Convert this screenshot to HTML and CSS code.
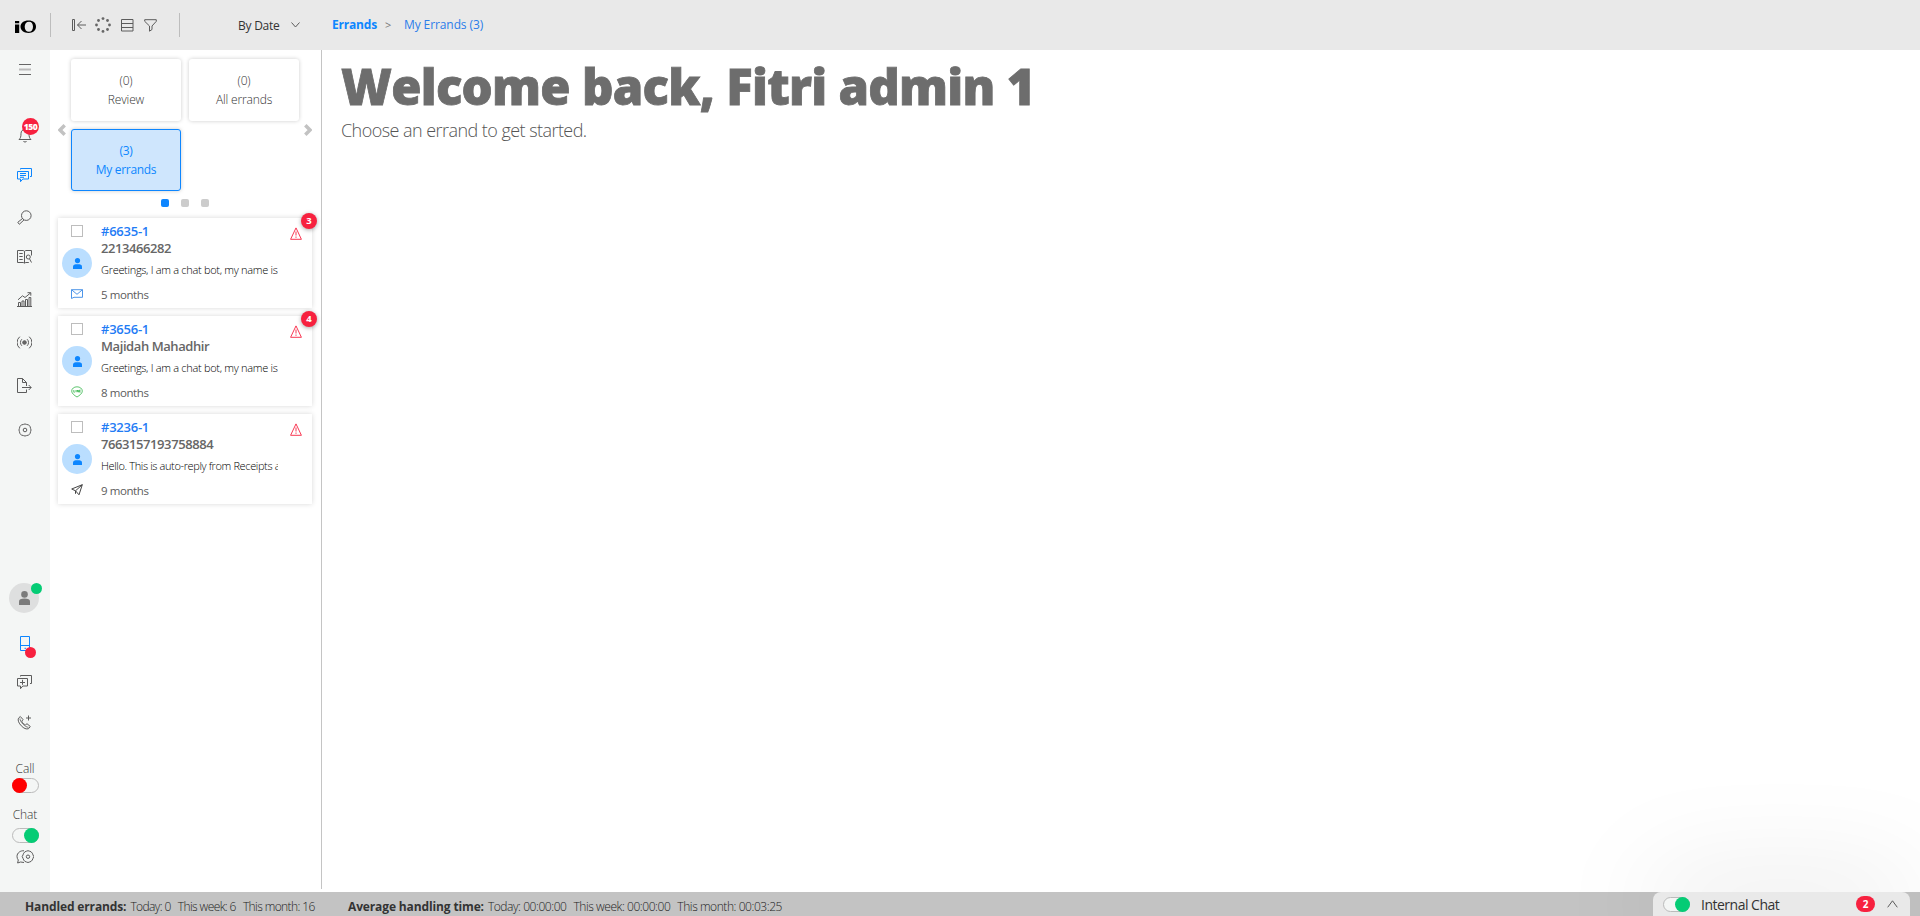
FILE: index.html
```html
<!DOCTYPE html>
<html lang="en">
<head>
<meta charset="utf-8">
<title>Errands</title>
<link rel="stylesheet" href="styles.css">
</head>
<body>
<div class="app">
  <header class="topbar">
    <svg class="logo" width="22" height="14" viewBox="0 0 22 14"><path d="M0 1h4.200v2.200H0zM0 4.600h4.200V13H0z"/><path fill-rule="evenodd" d="M13.500.5c5 0 7.500 2.500 7.500 6.100 0 3.900-3 6.400-7.500 6.400S5.500 10.500 5.500 6.800 8.500.5 13.500.5zm.6 1.300c-2.600 0-4.400 2-4.400 4.900 0 3 1.700 5 4.300 5 2.400 0 4-2 4-5 0-2.900-1.600-4.900-3.900-4.900z"/></svg>
    <span class="divider"></span>
    <div class="tools">
      <svg class="icon" width="15" height="14" viewBox="0 0 15 14"><path d="M.5 1.500h2v11h-2zM14 7H5.500M9.500 3L5.500 7l4 4"/></svg>
      <svg class="dots" width="16" height="16" viewBox="0 0 16 16"><circle cx="8" cy="1.600" r="1.400"/><circle cx="12.500" cy="3.500" r="1.400"/><circle cx="14.500" cy="8" r="1.400"/><circle cx="12.500" cy="12.500" r="1.400"/><circle cx="8" cy="14.400" r="1.400"/><circle cx="3.500" cy="12.500" r="1.400"/><circle cx="1.500" cy="8" r="1.400"/><circle cx="3.500" cy="3.500" r="1.400"/></svg>
      <svg class="icon" width="13" height="13" viewBox="0 0 13 13"><path d="M.5.5h11.500v11.500H.5zM.5 4.500H12M.5 8.500H12"/></svg>
      <svg class="icon" width="13" height="13" viewBox="0 0 13 13"><path d="M.7.700h11.600v1.600L8 7v3.500l-2.500 1.700V7L.7 2.300z"/></svg>
    </div>
    <span class="divider divider-end"></span>
    <span class="sort">By Date</span>
    <svg class="icon sort-arrow" width="9" height="6" viewBox="0 0 9 6"><path d="M.5.500l4 4.500 4-4.500"/></svg>
    <nav class="crumbs"><b>Errands</b><i>&gt;</i><span>My Errands (3)</span></nav>
  </header>

  <div class="body">
    <aside class="rail">
      <div class="slot"><svg width="12" height="12" viewBox="0 0 12 12"><path d="M0 .5h12M0 10.500h12" stroke="#666"/><path d="M0 5.500h12" stroke="#bbb" stroke-width="2"/></svg></div>
      <div class="slot"><svg class="icon" width="14" height="16" viewBox="0 0 14 16"><path d="M1 12.500c1.500-1.500 2-2.500 2-6C3 4 4.500 2.500 7 2.500s4 1.500 4 4c0 3.500.5 4.500 2 6zM5.300 14c.9 1.400 2.500 1.400 3.400 0"/></svg><span class="count">150</span></div>
      <div class="slot odd"><svg class="icon blue" width="15" height="15" viewBox="0 0 15 15"><path d="M.5 3.500h11v7.500H5.800L3.500 13.700V11H.5zM3.500 1.500V.5h11v8h-1.500M3 5.500h6M3 7.500h6M3 9.300h4"/></svg></div>
      <div class="slot odd"><svg class="icon" width="15" height="15" viewBox="0 0 15 15"><circle cx="9.300" cy="5.600" r="4.800"/><path d="M5.500 8.500L.8 12.300l1.500 2L7 9.900"/></svg></div>
      <div class="slot odd"><svg class="icon" width="15" height="15" viewBox="0 0 15 15"><path d="M.5 1.500h5.700L7.500 2.300l1.300-.8h5.700v5M.5 1.500v12h5.700l1.300.6 1.300-.6h3M7.500 2.300v11.800M2.300 4.500h3.400M2.300 7.500h3.400M2.300 10.500h3.400M12.500 9.800l2 3.700"/><circle cx="11.300" cy="8" r="2"/></svg></div>
      <div class="slot odd"><svg class="icon" width="15" height="15" viewBox="0 0 15 15"><path d="M0 14.500h15M1.500 14v-3.500h2V14M5 14V9h2v5M8.500 14V7.500h2V14M12 14V5.500h1.800V14M1 7.800l4.500-4 2.500 1.700 5.500-4.500M10.500.700h3.300v3"/></svg></div>
      <div class="slot odd"><svg class="icon" width="15" height="13" viewBox="0 0 15 13"><circle cx="7.500" cy="6.500" r="1.800" fill="#666"/><path d="M4.900 3.200a4.500 4.500 0 0 0 0 6.600M10.100 3.200a4.500 4.500 0 0 1 0 6.600M2.800.700a7.500 7.500 0 0 0 0 11.600M12.200.700a7.500 7.500 0 0 1 0 11.600"/></svg></div>
      <div class="slot odd"><svg class="icon" width="15" height="15" viewBox="0 0 15 15"><path d="M9.500 8V4.500L5.500.5h-5v14h9V11.500M5.500.5v4h4M5 9.500h9M11.700 7l2.500 2.500-2.500 2.500"/></svg></div>
      <div class="slot"><svg class="icon" width="14" height="14" viewBox="0 0 14 14"><path d="M5.500 1.400a3 3 0 0 1 3 0l1.900.5a3 3 0 0 1 1.700 1.700l.5 1.900a3 3 0 0 1 0 3l-.5 1.900a3 3 0 0 1-1.700 1.700l-1.900.5a3 3 0 0 1-3 0l-1.900-.5a3 3 0 0 1-1.700-1.700l-.5-1.900a3 3 0 0 1 0-3l.5-1.900a3 3 0 0 1 1.700-1.700z"/><circle cx="7" cy="7" r="1.800"/></svg></div>
      <div class="slot shift"><span class="avatar gray"><svg width="11" height="14" viewBox="0 0 11 14"><circle cx="5.500" cy="3.400" r="3.300"/><path d="M0 14v-3.500C0 8.500 2 7.600 5.500 7.600S11 8.500 11 10.500V14z"/></svg></span><span class="dot green"></span></div>
      <div class="slot"><svg class="icon blue" width="10" height="15" viewBox="0 0 10 15"><path d="M.5.500h9v14h-9zM.5 9.500h9M4.500 12.300h1.500"/></svg><span class="dot red"></span></div>
      <div class="slot odd"><svg class="icon" width="15" height="15" viewBox="0 0 15 15"><path d="M.5 3.500h10v7.500H5.800L3.500 13.700V11H.5zM3.500 1.500V.5h11v8h-1.500M5.500 4.800v5M3 7.500h5"/></svg></div>
      <div class="slot odd"><svg class="icon" width="15" height="15" viewBox="0 0 15 15"><path d="M1.500 3.200L3.300 1.500l2.700 3-1.200 1.700c.8 1.900 2 3 3.700 3.700L10 8.700l3.300 2.800-1.800 2.200c-2.200.8-4.700-.3-7.200-2.900S.5 5.200 1.500 3.200zM11.500.5v5M9 3h5"/><path d="M3 3.500c-.2 3 5 8.800 8.500 8.800" stroke-width=".8"/></svg></div>
      <div class="slot label">Call</div>
      <div class="slot"><span class="toggle off"></span></div>
      <div class="slot label">Chat</div>
      <div class="slot"><span class="toggle on"></span></div>
      <div class="slot"><svg class="icon" width="18" height="14" viewBox="0 0 18 14"><path d="M8 .8C4.500.3 1 3 1 6.300c0 1.500.4 2.700 1.300 3.700L1.600 13l3-1 3.400.5"/><path d="M10.700 1.100a2.500 2.500 0 0 1 2.600 0l1.800.7 1.200 1.400.7 1.700a2.500 2.500 0 0 1 0 3.400l-.7 1.700-1.200 1.400-1.800.7a2.500 2.500 0 0 1-2.600 0l-1.800-.7-1.200-1.400-.7-1.700a2.500 2.500 0 0 1 0-3.400l.7-1.700 1.200-1.400z"/><circle cx="12" cy="6.700" r="1.700"/></svg></div>
    </aside>

    <section class="list">
      <div class="carousel">
        <svg class="arrow" width="8" height="12" viewBox="0 0 8 12"><path d="M6.700 1.200L2 6l4.700 4.800"/></svg>
        <div class="tiles">
          <div class="tile"><span>(0)</span><span>Review</span></div>
          <div class="tile"><span>(0)</span><span>All errands</span></div>
          <div class="tile active"><span>(3)</span><span>My errands</span></div>
        </div>
        <svg class="arrow" width="8" height="12" viewBox="0 0 8 12"><path d="M1.300 1.200L6 6l-4.700 4.800"/></svg>
      </div>
      <div class="pager"><span class="current"></span><span></span><span></span></div>

      <div class="cards">
        <article class="card">
          <div class="marks"><span class="check"></span><span class="avatar sky"><svg width="9" height="11" viewBox="0 0 9 11"><circle cx="4.500" cy="2.600" r="2.600"/><path d="M0 11V8.500C0 6.800 1.500 6.200 4.500 6.200S9 6.800 9 8.500V11z"/></svg></span>
            <svg class="channel mail" width="12" height="10" viewBox="0 0 12 10"><path d="M.5.700h11v7.600H3L.5 9.500zM.5.700L6 5.300 11.500.700"/></svg></div>
          <div class="info"><span class="number">#6635-1</span><span class="name">2213466282</span><span class="preview">Greetings, I am a chat bot, my name is</span><span class="age">5 months</span></div>
          <svg class="alert" width="12" height="13" viewBox="0 0 12 13"><path d="M6 .9l5.400 11.400H.6zM6 4.500v4M6 9.500v1.300"/></svg>
          <span class="badge">3</span>
        </article>
        <article class="card">
          <div class="marks"><span class="check"></span><span class="avatar sky"><svg width="9" height="11" viewBox="0 0 9 11"><circle cx="4.500" cy="2.600" r="2.600"/><path d="M0 11V8.500C0 6.800 1.500 6.200 4.500 6.200S9 6.800 9 8.500V11z"/></svg></span>
            <svg class="channel line" width="12" height="12" viewBox="0 0 12 12"><path d="M6 .8c3 0 5.300 1.800 5.300 4.300C11.300 7.500 8.500 9.500 6 11 3.500 9.500.7 7.500.7 5.100.7 2.600 3 .8 6 .8zM2.800 4v2.200h1M5 4v2.200M6.200 6.200V4l1.200 2.200V4M9.500 4h-.9v2.200h.9M8.600 5.100h.8"/></svg></div>
          <div class="info"><span class="number">#3656-1</span><span class="name">Majidah Mahadhir</span><span class="preview">Greetings, I am a chat bot, my name is</span><span class="age">8 months</span></div>
          <svg class="alert" width="12" height="13" viewBox="0 0 12 13"><path d="M6 .9l5.400 11.400H.6zM6 4.500v4M6 9.500v1.300"/></svg>
          <span class="badge">4</span>
        </article>
        <article class="card">
          <div class="marks"><span class="check"></span><span class="avatar sky"><svg width="9" height="11" viewBox="0 0 9 11"><circle cx="4.500" cy="2.600" r="2.600"/><path d="M0 11V8.500C0 6.800 1.500 6.200 4.500 6.200S9 6.800 9 8.500V11z"/></svg></span>
            <svg class="channel" width="12" height="12" viewBox="0 0 12 12"><path d="M11.300.7L.7 5l3.800 1.800L8 10.800zM11.300.7L4.500 6.800v3"/></svg></div>
          <div class="info"><span class="number">#3236-1</span><span class="name">7663157193758884</span><span class="preview tight">Hello. This is auto-reply from Receipts a</span><span class="age">9 months</span></div>
          <svg class="alert" width="12" height="13" viewBox="0 0 12 13"><path d="M6 .9l5.400 11.400H.6zM6 4.500v4M6 9.500v1.300"/></svg>
        </article>
      </div>
    </section>

    <main class="main">
      <h1>Welcome back, Fitri admin 1</h1>
      <p>Choose an errand to get started.</p>
    </main>
  </div>

  <footer class="footer">
    <div class="stat handled"><b>Handled errands:</b><span>Today: 0</span><span>This week: 6</span><span>This month: 16</span></div>
    <div class="stat average"><b>Average handling time:</b><span>Today: 00:00:00</span><span>This week: 00:00:00</span><span>This month: 00:03:25</span></div>
    <div class="chat"><span class="toggle on"></span><span class="chat-title">Internal Chat</span><span class="chat-count">2</span><svg class="icon" width="11" height="8" viewBox="0 0 11 8"><path d="M.7 7.300l4.800-6.500 4.800 6.500"/></svg></div>
  </footer>
</div>
</body>
</html>
```
FILE: styles.css
```css
* { box-sizing: border-box; }
body { margin: 0; font-family: "Open Sans", "Noto Sans", sans-serif; font-size: 12px; color: #5c5c5c; }
svg { display: block; flex: none; }
.app { height: 916px; display: flex; flex-direction: column; overflow: hidden; background: #fff; }
.icon { fill: none; stroke: #5c5c5c; stroke-width: 1; }
.icon.blue { stroke: #0d86ff; }

.topbar { height: 50px; flex: none; background: #e9e9e9; display: flex; align-items: center; padding-left: 15px; }
.logo { margin-top: 4px; }
.divider { width: 1px; height: 24px; margin-left: 13px; background: #bdbdbd; }
.tools { display: flex; align-items: center; gap: 10px; margin-left: 21px; }
.tools .dots { margin: 0 -1px 0 -2px; fill: #666; }
.tools svg:nth-child(3) { margin-left: 1px; }
.divider-end { margin-left: 22px; }
.sort { width: 42px; margin-left: 58px; color: #333; white-space: nowrap; letter-spacing: -.25px; }
.sort-arrow { margin-left: 11px; }
.crumbs { display: flex; margin-left: 32px; color: #2b7de9; white-space: nowrap; line-height: 16px; }
.crumbs b { width: 53px; color: #0d86ff; letter-spacing: -.2px; }
.crumbs i { width: 19px; font-style: normal; font-size: 11px; color: #777; }
.crumbs span { letter-spacing: -.1px; }

.body { height: 842px; flex: none; display: flex; }
.rail { width: 50px; padding-top: 12px; background: #f4f6f5; display: grid; align-content: start;
  grid-template-rows: 65px 41px 42px 39px 43px 43px 43px 44px 168px 45px 40px 40px 46px 16px 30px 20px 22px 16px; }
.slot { position: relative; height: 16px; display: flex; align-items: center; justify-content: center; }
.slot.shift { padding-right: 2px; }
.slot.odd { padding: 0 0 1px 0; margin-right: -1px; width: 51px; padding-right: 2px; }
.label { font-weight: 300; color: #333; letter-spacing: -.1px; padding-bottom: 2px; }
.count { position: absolute; left: 22px; top: -9px; width: 17px; height: 17px; border-radius: 50%; background: #f7213f; color: #fff; font-size: 8.500px; font-weight: 800; line-height: 17px; text-align: center; letter-spacing: -.4px; }
.dot { position: absolute; width: 11px; height: 11px; border-radius: 50%; }
.dot.green { left: 31px; top: -7px; background: #05cc75; }
.dot.red { left: 25px; top: 12px; background: #f7213f; }
.avatar { width: 30px; height: 30px; border-radius: 50%; display: flex; align-items: center; justify-content: center; flex: none; }
.avatar.gray { background: #dedfdf; fill: #7b7b7b; }
.avatar.sky { background: #badeff; fill: #0d86ff; }
.toggle { width: 27px; height: 15px; border: 1px solid #bbb; border-radius: 8px; display: flex; align-items: center; flex: none; }
.toggle::after { content: ""; width: 15px; height: 15px; border-radius: 50%; flex: none; }
.toggle.off::after { background: red; margin-left: -1px; }
.toggle.on { justify-content: flex-end; background: #f4f6f5; }
.toggle.on::after { background: #05cc75; margin-right: -1px; }

.list { width: 272px; height: 839px; padding: 9px 9px 0 8px; border-right: 1px solid #c4c4c4; }
.carousel { display: flex; align-items: center; justify-content: space-between; height: 132px; }
.arrow { fill: none; stroke: #c2c2c2; stroke-width: 3.4; margin-top: 10px; }
.tiles { display: grid; grid-template-columns: 110px 110px; grid-auto-rows: 62px; gap: 8px; }
.tile { display: flex; flex-direction: column; align-items: center; padding-top: 12px; line-height: 19px; font-weight: 300; color: #333; background: #fff; border-radius: 3px; box-shadow: 0 0 4px rgba(0,0,0,.2); letter-spacing: -.15px; }
.tile.active { border: 1px solid #0d86ff; background: #cfe6fd; color: #0d86ff; padding-top: 11px; font-weight: 400; letter-spacing: -.3px; }
.pager { display: flex; justify-content: center; gap: 12px; height: 8px; margin: 8px 0 11px; }
.pager span { width: 8px; border-radius: 2px; background: #ccc; }
.pager .current { background: #0d86ff; }
.cards { display: flex; flex-direction: column; gap: 8px; }
.card { position: relative; height: 90px; display: flex; background: #fff; box-shadow: 0 0 5px rgba(0,0,0,.16); }
.marks { width: 38px; display: flex; flex-direction: column; align-items: center; padding-top: 7px; }
.check { width: 12px; height: 12px; border: 1px solid #bdbdbd; }
.marks .avatar { margin-top: 11px; }
.channel { margin-top: 10px; fill: none; stroke: #444; stroke-width: 1; }
.channel.mail { stroke: #4e95e8; margin-top: 11px; }
.channel.line { stroke: #35b54a; stroke-width: .8; }
.info { width: 183px; margin-left: 5px; padding-top: 4px; display: flex; flex-direction: column; white-space: nowrap; }
.number { color: #1f7cf5; font-weight: 600; font-size: 13px; line-height: 18px; letter-spacing: -.25px; }
.name { font-weight: 600; font-size: 13px; line-height: 17px; color: #666; letter-spacing: -.42px; }
.preview { width: 177px; overflow: hidden; font-size: 11px; font-weight: 300; line-height: 16px; margin-top: 5px; color: #000; letter-spacing: -.3px; }
.preview.tight { letter-spacing: -.37px; }
.age { font-size: 11.500px; font-weight: 500; line-height: 16px; margin-top: 9px; letter-spacing: -.42px; }
.alert { margin: 9px 0 0 6px; fill: none; stroke: #f7213f; stroke-width: .9; }
.badge { position: absolute; right: -5px; top: -5px; width: 16px; height: 16px; border-radius: 50%; background: #f7213f; color: #fff; font-size: 9.500px; font-weight: 700; line-height: 16px; text-align: center; box-shadow: 0 1px 4px rgba(0,0,0,.35); }

.main { padding: 2px 19px; }
h1 { margin: 0; font-size: 49px; line-height: 68px; font-weight: 800; color: #6d6d6d; white-space: nowrap; letter-spacing: -.72px; -webkit-text-stroke: .8px #6d6d6d; }
p { margin: -2px 0 0; font-size: 18px; line-height: 24px; font-weight: 300; color: #555; letter-spacing: -.55px; }

.footer { height: 24px; flex: none; display: flex; background: #c3c3c3; color: #333; line-height: 30px; padding: 0 10px 0 25px; white-space: nowrap; }
.stat { display: flex; gap: 7px; font-weight: 300; color: #222; letter-spacing: -.44px; }
.stat b { font-weight: 700; color: #333; letter-spacing: -.13px; margin-right: -3px; }
.handled { width: 323px; letter-spacing: -.6px; }
.chat { width: 257px; height: 24px; margin-left: auto; display: flex; align-items: center; padding-left: 10px; background: #e9e9e9; border-radius: 8px 8px 0 0; box-shadow: 0 0 110px rgba(0,0,0,.22); }
.chat-title { width: 155px; margin-left: 11px; color: #333; font-size: 14px; line-height: 24px; padding-top: 2px; letter-spacing: -.5px; }
.chat-count { width: 19px; height: 16px; border-radius: 8px; background: #f7213f; color: #fff; font-size: 10px; font-weight: 700; line-height: 16px; text-align: center; }
.chat .icon { margin-left: 12px; }
```
